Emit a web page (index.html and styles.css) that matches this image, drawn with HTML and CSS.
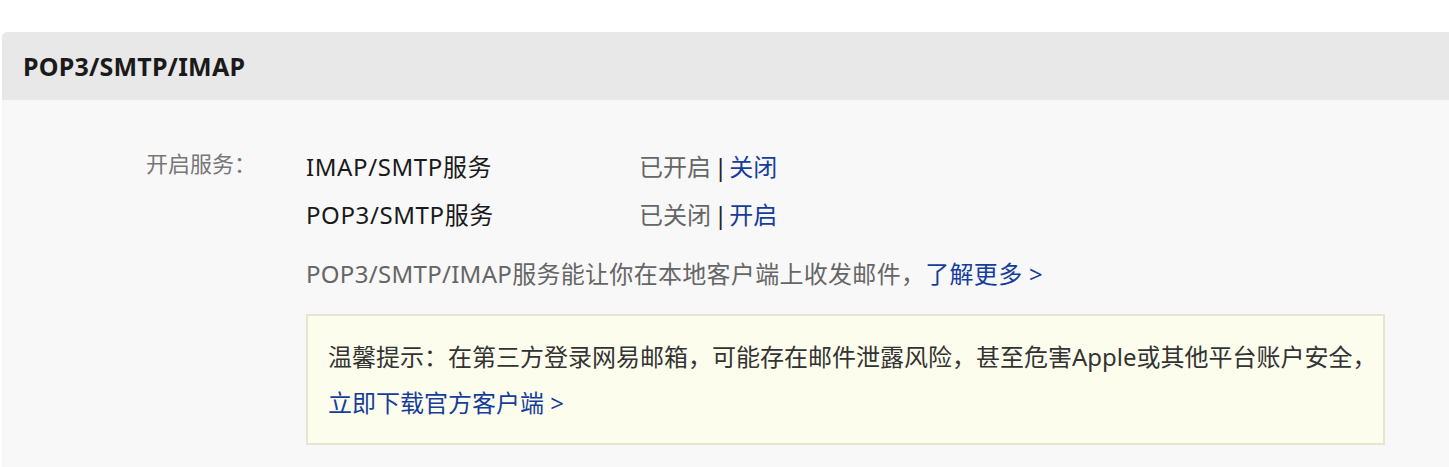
FILE: index.html
```html
<!DOCTYPE html>
<html lang="zh-CN">
<head>
<meta charset="utf-8">
<title>POP3/SMTP/IMAP</title>
<link rel="stylesheet" href="styles.css">
</head>
<body>
<section class="panel">
  <header class="panel-head">
    <h2 class="panel-title">POP3/SMTP/IMAP</h2>
  </header>
  <div class="panel-body">
    <div class="svc-grid">
      <div class="svc-label">开启服务：</div>
      <div class="svc-list">
        <div class="svc-row">
          <span class="svc-name">IMAP/SMTP服务</span>
          <span class="svc-state">已开启<span class="sep">|</span><a class="link" href="#">关闭</a></span>
        </div>
        <div class="svc-row">
          <span class="svc-name">POP3/SMTP服务</span>
          <span class="svc-state">已关闭<span class="sep">|</span><a class="link" href="#">开启</a></span>
        </div>
        <p class="svc-desc">POP3/SMTP/IMAP服务能让你在本地客户端上收发邮件，<a class="link" href="#">了解更多 &gt;</a></p>
        <div class="tip">
          <p class="tip-text">温馨提示：在第三方登录网易邮箱，可能存在邮件泄露风险，甚至危害Apple或其他平台账户安全，</p>
          <p class="tip-text"><a class="link" href="#">立即下载官方客户端 &gt;</a></p>
        </div>
      </div>
    </div>
  </div>
</section>
</body>
</html>
```
FILE: styles.css
```css
html, body {
  margin: 0;
  padding: 0;
  background: #ffffff;
}
body {
  font-family: "Noto Sans", "Noto Sans CJK SC", sans-serif;
  color: #222;
  overflow: hidden;
}
.panel {
  margin: 32px 0 0 2px;
  background: #f8f8f8;
  border-radius: 5px 0 0 0;
  overflow: hidden;
  min-height: 435px;
}
.panel-head {
  height: 68px;
  background: #e8e8e8;
  display: flex;
  align-items: center;
  padding-left: 21px;
}
.panel-title {
  margin: 0;
  font-size: 25px;
  font-weight: 700;
  color: #1a1a1a;
  letter-spacing: 0.2px;
}
.panel-body {
  padding-top: 43px;
}
.svc-grid {
  display: flex;
}
.svc-label {
  flex: none;
  width: 304px;
  box-sizing: border-box;
  padding-right: 50px;
  text-align: right;
  font-size: 22px;
  line-height: 48px;
  color: #777;
  margin-top: -4px;
}
.svc-list {
  flex: none;
  width: 1079px;
}
.svc-row {
  display: flex;
  font-size: 24px;
  line-height: 48px;
}
.svc-name {
  width: 333px;
  color: #1a1a1a;
  letter-spacing: 0.6px;
}
.svc-state {
  color: #666;
}
.sep {
  color: #222;
  margin: 0 2px 0 3px;
}
.link {
  color: #163d9c;
  text-decoration: none;
}
.svc-desc {
  margin: 11px 0 0;
  font-size: 24px;
  line-height: 48px;
  color: #666;
  letter-spacing: 0.3px;
}
.tip {
  margin-top: 16px;
  border: 2px solid #e6e6cf;
  background: #fdfdee;
  padding: 18px 20px 17px;
}
.tip-text {
  margin: 0;
  font-size: 24px;
  line-height: 46px;
  color: #333;
  white-space: nowrap;
}
```
